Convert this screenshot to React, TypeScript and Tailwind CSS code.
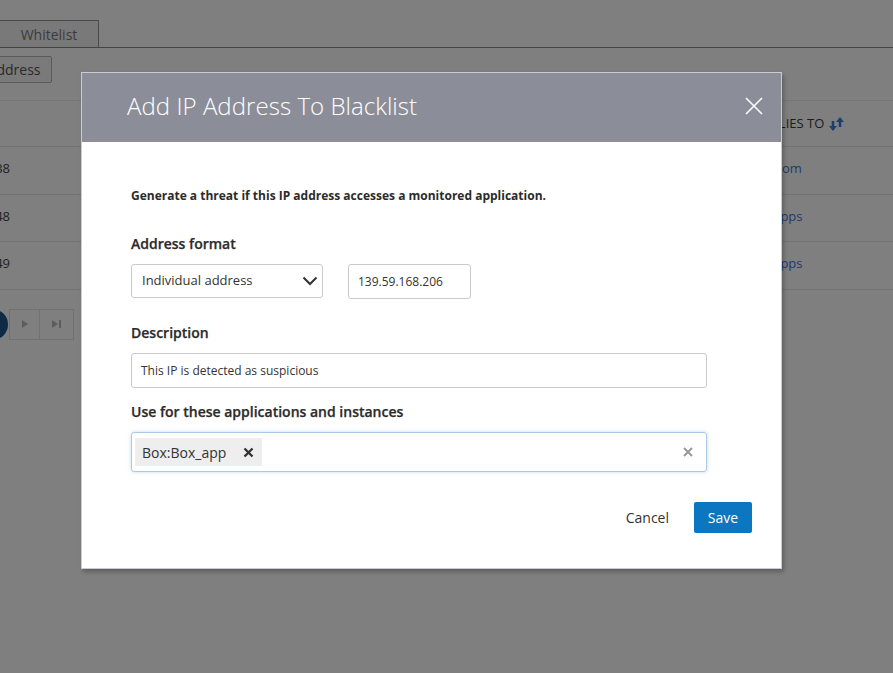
import React from 'react';

const rows = [
  { ip: '139.59.168.138', applies: 'Custom' },
  { ip: '139.59.168.148', applies: 'All apps' },
  { ip: '139.59.168.149', applies: 'All apps' },
];

const BackgroundPage: React.FC = () => (
  <div className="-ml-[100px] w-[993px]">
    {/* Tabs */}
    <div className="flex pt-[20px] border-b border-[#8a8a8a]">
      <div className="w-[100px] h-[27px] border border-b-0 border-[#959595] bg-white" />
      <div className="w-[99px] h-[27px] flex items-center justify-center border border-b-0 border-l-0 border-[#959595] bg-[#f3f3f3] text-[14px] text-[#777]">
        Whitelist
      </div>
    </div>

    {/* Toolbar */}
    <div className="pt-[8px] pb-[17px] pl-[31px]">
      <button className="h-[27px] px-[10px] border border-[#b5b5b5] rounded-[2px] bg-[#f4f4f4] text-[14px] text-[#555]">
        Add IP Address
      </button>
    </div>

    {/* Table */}
    <div className="border-t border-[#ececec]">
      <div className="flex h-[46px] items-center border-b border-[#e4e4e4]">
        <div className="flex-1" />
        <div className="w-[148px] pl-[10px] flex items-center gap-[5px] text-[13px] text-[#3a3a3a] uppercase">
          Applies to
          <svg width="15" height="14" viewBox="0 0 15 14" className="text-[#3e7de0]">
            <path d="M4 4 L4 10" stroke="currentColor" strokeWidth="2.6" />
            <path d="M0 9 L8 9 L4 14 Z" fill="currentColor" />
            <path d="M11 10 L11 4" stroke="currentColor" strokeWidth="2.6" />
            <path d="M7 5 L15 5 L11 0 Z" fill="currentColor" />
          </svg>
        </div>
      </div>
      {rows.map((r) => (
        <div key={r.ip} className="flex h-[47.5px] items-center pb-[3px] border-b border-[#e4e4e4] text-[13px]">
          <div className="w-[110px] text-right text-[#444]">{r.ip}</div>
          <div className="flex-1" />
          <div className="w-[148px] pl-[10px] text-[#3c78d8]">{r.applies}</div>
        </div>
      ))}
    </div>

    {/* Pagination */}
    <div className="flex items-center pt-[19px] pl-[77px]">
      <div className="w-[31px] h-[31px] rounded-full bg-[#1f5488]" />
      <div className="ml-[1px] flex h-[31px] border border-[#e2e2e2]">
        <div className="w-[30px] flex items-center justify-center border-r border-[#e2e2e2] text-[#bbb]">
          <svg width="6" height="8" viewBox="0 0 6 8">
            <path d="M0 0 L6 4 L0 8 Z" fill="currentColor" />
          </svg>
        </div>
        <div className="w-[33px] flex items-center justify-center text-[#bbb]">
          <svg width="9" height="8" viewBox="0 0 9 8">
            <path d="M0 0 L6 4 L0 8 Z" fill="currentColor" />
            <rect x="7" y="0" width="2" height="8" fill="currentColor" />
          </svg>
        </div>
      </div>
    </div>
  </div>
);

const AddIpModal: React.FC = () => (
  <div className="absolute left-[81px] top-[72px] w-[701px] h-[497px] bg-white border border-[#c9ccd3] shadow-[2px_3px_4px_rgba(0,0,0,0.25)]">
    {/* Header */}
    <div className="h-[69px] bg-[#8b8e99] flex items-center justify-between pl-[45px] pr-[17px] pb-[3px]">
      <h2 className="text-[24px] font-light text-white tracking-[0.05px]">Add IP Address To Blacklist</h2>
      <button aria-label="Close" className="w-[20px] h-[20px] flex items-center justify-center">
        <svg width="18" height="18" viewBox="0 0 18 18">
          <path d="M1 1 L17 17 M17 1 L1 17" stroke="white" strokeWidth="1.6" />
        </svg>
      </button>
    </div>

    {/* Body */}
    <div className="pl-[49px] pr-[74px] pt-[46px] text-[#2b2b2b]">
      <p className="text-[12px] font-bold leading-[16px]">
        Generate a threat if this IP address accesses a monitored application.
      </p>

      <label className="block mt-[30px] text-[14px] font-semibold leading-[20px] [-webkit-text-stroke:0.25px_#2b2b2b]">Address format</label>
      <div className="flex mt-[10px]">
        <div className="w-[192px] h-[34px] flex items-center justify-between pl-[10px] pr-[4px] border border-[#cacaca] rounded-[3px] text-[13px] text-[#333]">
          <span>Individual address</span>
          <svg width="16" height="10" viewBox="0 0 16 10">
            <path d="M1.5 1.5 L8 8 L14.5 1.5" stroke="#333" strokeWidth="2" fill="none" />
          </svg>
        </div>
        <div className="ml-[25px] w-[123px] h-[35px] flex items-center pl-[9px] border border-[#cacaca] rounded-[3px] text-[12px] text-[#333]">
          139.59.168.206
        </div>
      </div>

      <label className="block mt-[24px] text-[14px] font-semibold leading-[20px] [-webkit-text-stroke:0.25px_#2b2b2b]">Description</label>
      <div className="mt-[10px] w-[576px] h-[35px] flex items-center pl-[9px] border border-[#cacaca] rounded-[3px] text-[12px] text-[#333]">
        This IP is detected as suspicious
      </div>

      <label className="block mt-[14px] text-[14px] font-semibold leading-[20px] [-webkit-text-stroke:0.25px_#2b2b2b]">Use for these applications and instances</label>
      <div className="mt-[10px] w-[576px] h-[40px] flex items-center justify-between pl-[3px] pr-[13px] border border-[#a9c9e6] rounded-[3px] shadow-[0_0_4px_rgba(102,160,220,0.35)]">
        <span className="h-[28px] flex items-center gap-[17px] pl-[7px] pr-[8px] bg-[#eeeeee] text-[14px] text-[#333]">
          Box:Box_app
          <svg width="11" height="11" viewBox="0 0 11 11">
            <path d="M1.5 1.5 L9.5 9.5 M9.5 1.5 L1.5 9.5" stroke="#333" strokeWidth="2.4" />
          </svg>
        </span>
        <svg width="10" height="10" viewBox="0 0 10 10">
          <path d="M1 1 L9 9 M9 1 L1 9" stroke="#999" strokeWidth="2" />
        </svg>
      </div>
    </div>

    {/* Footer */}
    <div className="flex items-center justify-end pr-[29px] pt-[30px]">
      <button className="text-[14px] text-[#333] mr-[25px]">Cancel</button>
      <button className="w-[58px] h-[31px] bg-[#0b77c1] rounded-[2px] text-[14px] text-white">Save</button>
    </div>
  </div>
);

export default function App() {
  return (
    <div
      className="relative w-[893px] h-[673px] overflow-hidden bg-white"
      style={{ fontFamily: '"Open Sans", "Noto Sans", sans-serif' }}
    >
      <BackgroundPage />
      <div className="absolute inset-0 bg-black/50" />
      <AddIpModal />
    </div>
  );
}
